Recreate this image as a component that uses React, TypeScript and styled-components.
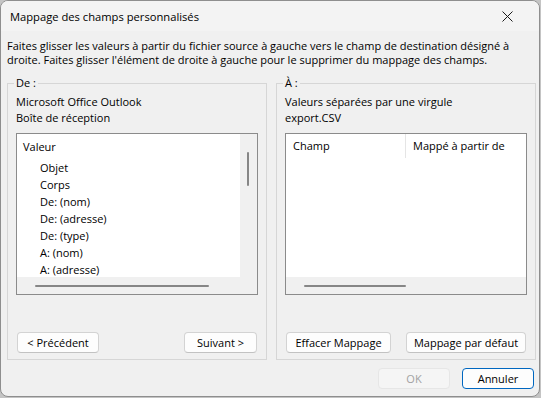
import React from 'react';
import styled, { createGlobalStyle } from 'styled-components';

const GlobalStyle = createGlobalStyle`
  html, body {
    margin: 0;
    padding: 0;
    background: #c4c4c4;
  }
  body {
    font-family: "Open Sans", "Noto Sans", sans-serif;
    font-size: 11px;
    color: #000;
  }
`;

const Window = styled.div`
  width: 538px;
  height: 395px;
  border: 1px solid #8e8e8e;
  border-radius: 8px;
  background: #f0f0f0;
  overflow: hidden;
  display: flex;
  flex-direction: column;
`;

const TitleBar = styled.div`
  height: 30px;
  flex: none;
  display: flex;
  align-items: center;
  justify-content: space-between;
  padding: 0 26px 0 9px;
  background: #f3f3f3;
  font-size: 11.2px;
`;

const CloseIcon = styled.svg`
  width: 11px;
  height: 11px;
  display: block;
`;

const Body = styled.div`
  flex: 1;
  display: flex;
  flex-direction: column;
  padding: 8px 0 7px 6px;
`;

const Intro = styled.p`
  margin: 0 0 9px;
  line-height: 14px;
  width: 528px;
`;

const Groups = styled.div`
  display: flex;
  gap: 9px;
`;

const Group = styled.fieldset`
  margin: 0;
  width: 260px;
  height: 284px;
  box-sizing: border-box;
  padding: 0 8px 6px 8px;
  border: 1px solid #d6d6d6;
  display: flex;
  flex-direction: column;
`;

const Legend = styled.legend`
  padding: 0 2px;
  margin-left: -2px;
  line-height: 14px;
`;

const Line = styled.div`
  line-height: 16px;
  &:first-of-type {
    margin-top: 4px;
  }
`;

const ListBox = styled.div<{ $vscroll?: boolean }>`
  margin-top: 7px;
  width: 242px;
  height: 162px;
  box-sizing: border-box;
  border: 1px solid #8b8b8b;
  background: #fff;
  display: grid;
  grid-template-columns: ${(p) => (p.$vscroll ? '1fr 17px' : '1fr')};
  grid-template-rows: 1fr 17px;
  overflow: hidden;
`;

const TreeArea = styled.div`
  padding-top: 4px;
  overflow: hidden;
`;

const TreeRow = styled.div<{ $indent?: number }>`
  height: 17px;
  line-height: 17px;
  padding-left: ${(p) => 6 + (p.$indent || 0) * 17}px;
  white-space: nowrap;
  &:first-child {
    margin-bottom: 4px;
  }
`;

const VTrack = styled.div`
  background: #f0f0f0;
  display: flex;
  padding: 18px 0 0 7px;
`;

const VThumb = styled.div`
  width: 2px;
  height: 34px;
  border-radius: 1px;
  background: #868686;
`;

const HTrack = styled.div<{ $full?: boolean }>`
  background: #f0f0f0;
  display: flex;
  align-items: center;
  padding-left: 18px;
  grid-column: ${(p) => (p.$full ? '1 / -1' : 'auto')};
`;

const HThumb = styled.div<{ $w: number }>`
  width: ${(p) => p.$w}px;
  height: 2px;
  border-radius: 1px;
  background: #868686;
`;

const Corner = styled.div`
  background: #f0f0f0;
`;

const Table = styled.div`
  display: flex;
  flex-direction: column;
`;

const HeaderRow = styled.div`
  display: flex;
  height: 24px;
`;

const HeaderCell = styled.div<{ $w?: number }>`
  box-sizing: border-box;
  width: ${(p) => (p.$w ? `${p.$w}px` : 'auto')};
  flex: ${(p) => (p.$w ? 'none' : '1')};
  padding-left: 7px;
  line-height: 23px;
  white-space: nowrap;
  & + & {
    border-left: 1px solid #e5e5e5;
  }
`;

const ButtonRow = styled.div`
  margin-top: auto;
  display: flex;
  justify-content: space-between;
  padding: 0 1px;
`;

const Button = styled.button<{ $w: number; $primary?: boolean }>`
  width: ${(p) => p.$w}px;
  height: 21px;
  padding: 0;
  font-family: inherit;
  font-size: 11px;
  color: #000;
  background: #fdfdfd;
  border: 1px solid ${(p) => (p.$primary ? '#0067c0' : '#d3d3d3')};
  border-bottom-color: ${(p) => (p.$primary ? '#0067c0' : '#c2c2c2')};
  border-radius: 4px;
  &:disabled {
    color: #a2a2a2;
    background: #f5f5f5;
    border-color: #e6e6e6;
  }
`;

const Footer = styled.div`
  margin-top: 8px;
  display: flex;
  justify-content: flex-end;
  gap: 12px;
  padding-right: 5px;
`;

const treeItems = ['Objet', 'Corps', 'De: (nom)', 'De: (adresse)', 'De: (type)', 'A: (nom)', 'A: (adresse)'];

export default function App() {
  return (
    <>
      <GlobalStyle />
      <Window>
        <TitleBar>
          <span>Mappage des champs personnalisés</span>
          <CloseIcon viewBox="0 0 11 11">
            <path d="M0.5 0.5 L10.5 10.5 M10.5 0.5 L0.5 10.5" stroke="#1a1a1a" strokeWidth="1" />
          </CloseIcon>
        </TitleBar>
        <Body>
          <Intro>
            Faites glisser les valeurs à partir du fichier source à gauche vers le champ de destination désigné à
            droite. Faites glisser l'élément de droite à gauche pour le supprimer du mappage des champs.
          </Intro>
          <Groups>
            <Group>
              <Legend>De :</Legend>
              <Line>Microsoft Office Outlook</Line>
              <Line>Boîte de réception</Line>
              <ListBox $vscroll>
                <TreeArea>
                  <TreeRow>Valeur</TreeRow>
                  {treeItems.map((item) => (
                    <TreeRow key={item} $indent={1}>
                      {item}
                    </TreeRow>
                  ))}
                </TreeArea>
                <VTrack>
                  <VThumb />
                </VTrack>
                <HTrack>
                  <HThumb $w={174} />
                </HTrack>
                <Corner />
              </ListBox>
              <ButtonRow>
                <Button $w={82}>&lt; Précédent</Button>
                <Button $w={73}>Suivant &gt;</Button>
              </ButtonRow>
            </Group>
            <Group>
              <Legend>À :</Legend>
              <Line>Valeurs séparées par une virgule</Line>
              <Line>export.CSV</Line>
              <ListBox>
                <Table>
                  <HeaderRow>
                    <HeaderCell $w={119}>Champ</HeaderCell>
                    <HeaderCell>Mappé à partir de</HeaderCell>
                  </HeaderRow>
                </Table>
                <HTrack $full>
                  <HThumb $w={102} />
                </HTrack>
              </ListBox>
              <ButtonRow>
                <Button $w={105}>Effacer Mappage</Button>
                <Button $w={120}>Mappage par défaut</Button>
              </ButtonRow>
            </Group>
          </Groups>
          <Footer>
            <Button $w={72} disabled>
              OK
            </Button>
            <Button $w={72} $primary>
              Annuler
            </Button>
          </Footer>
        </Body>
      </Window>
    </>
  );
}
